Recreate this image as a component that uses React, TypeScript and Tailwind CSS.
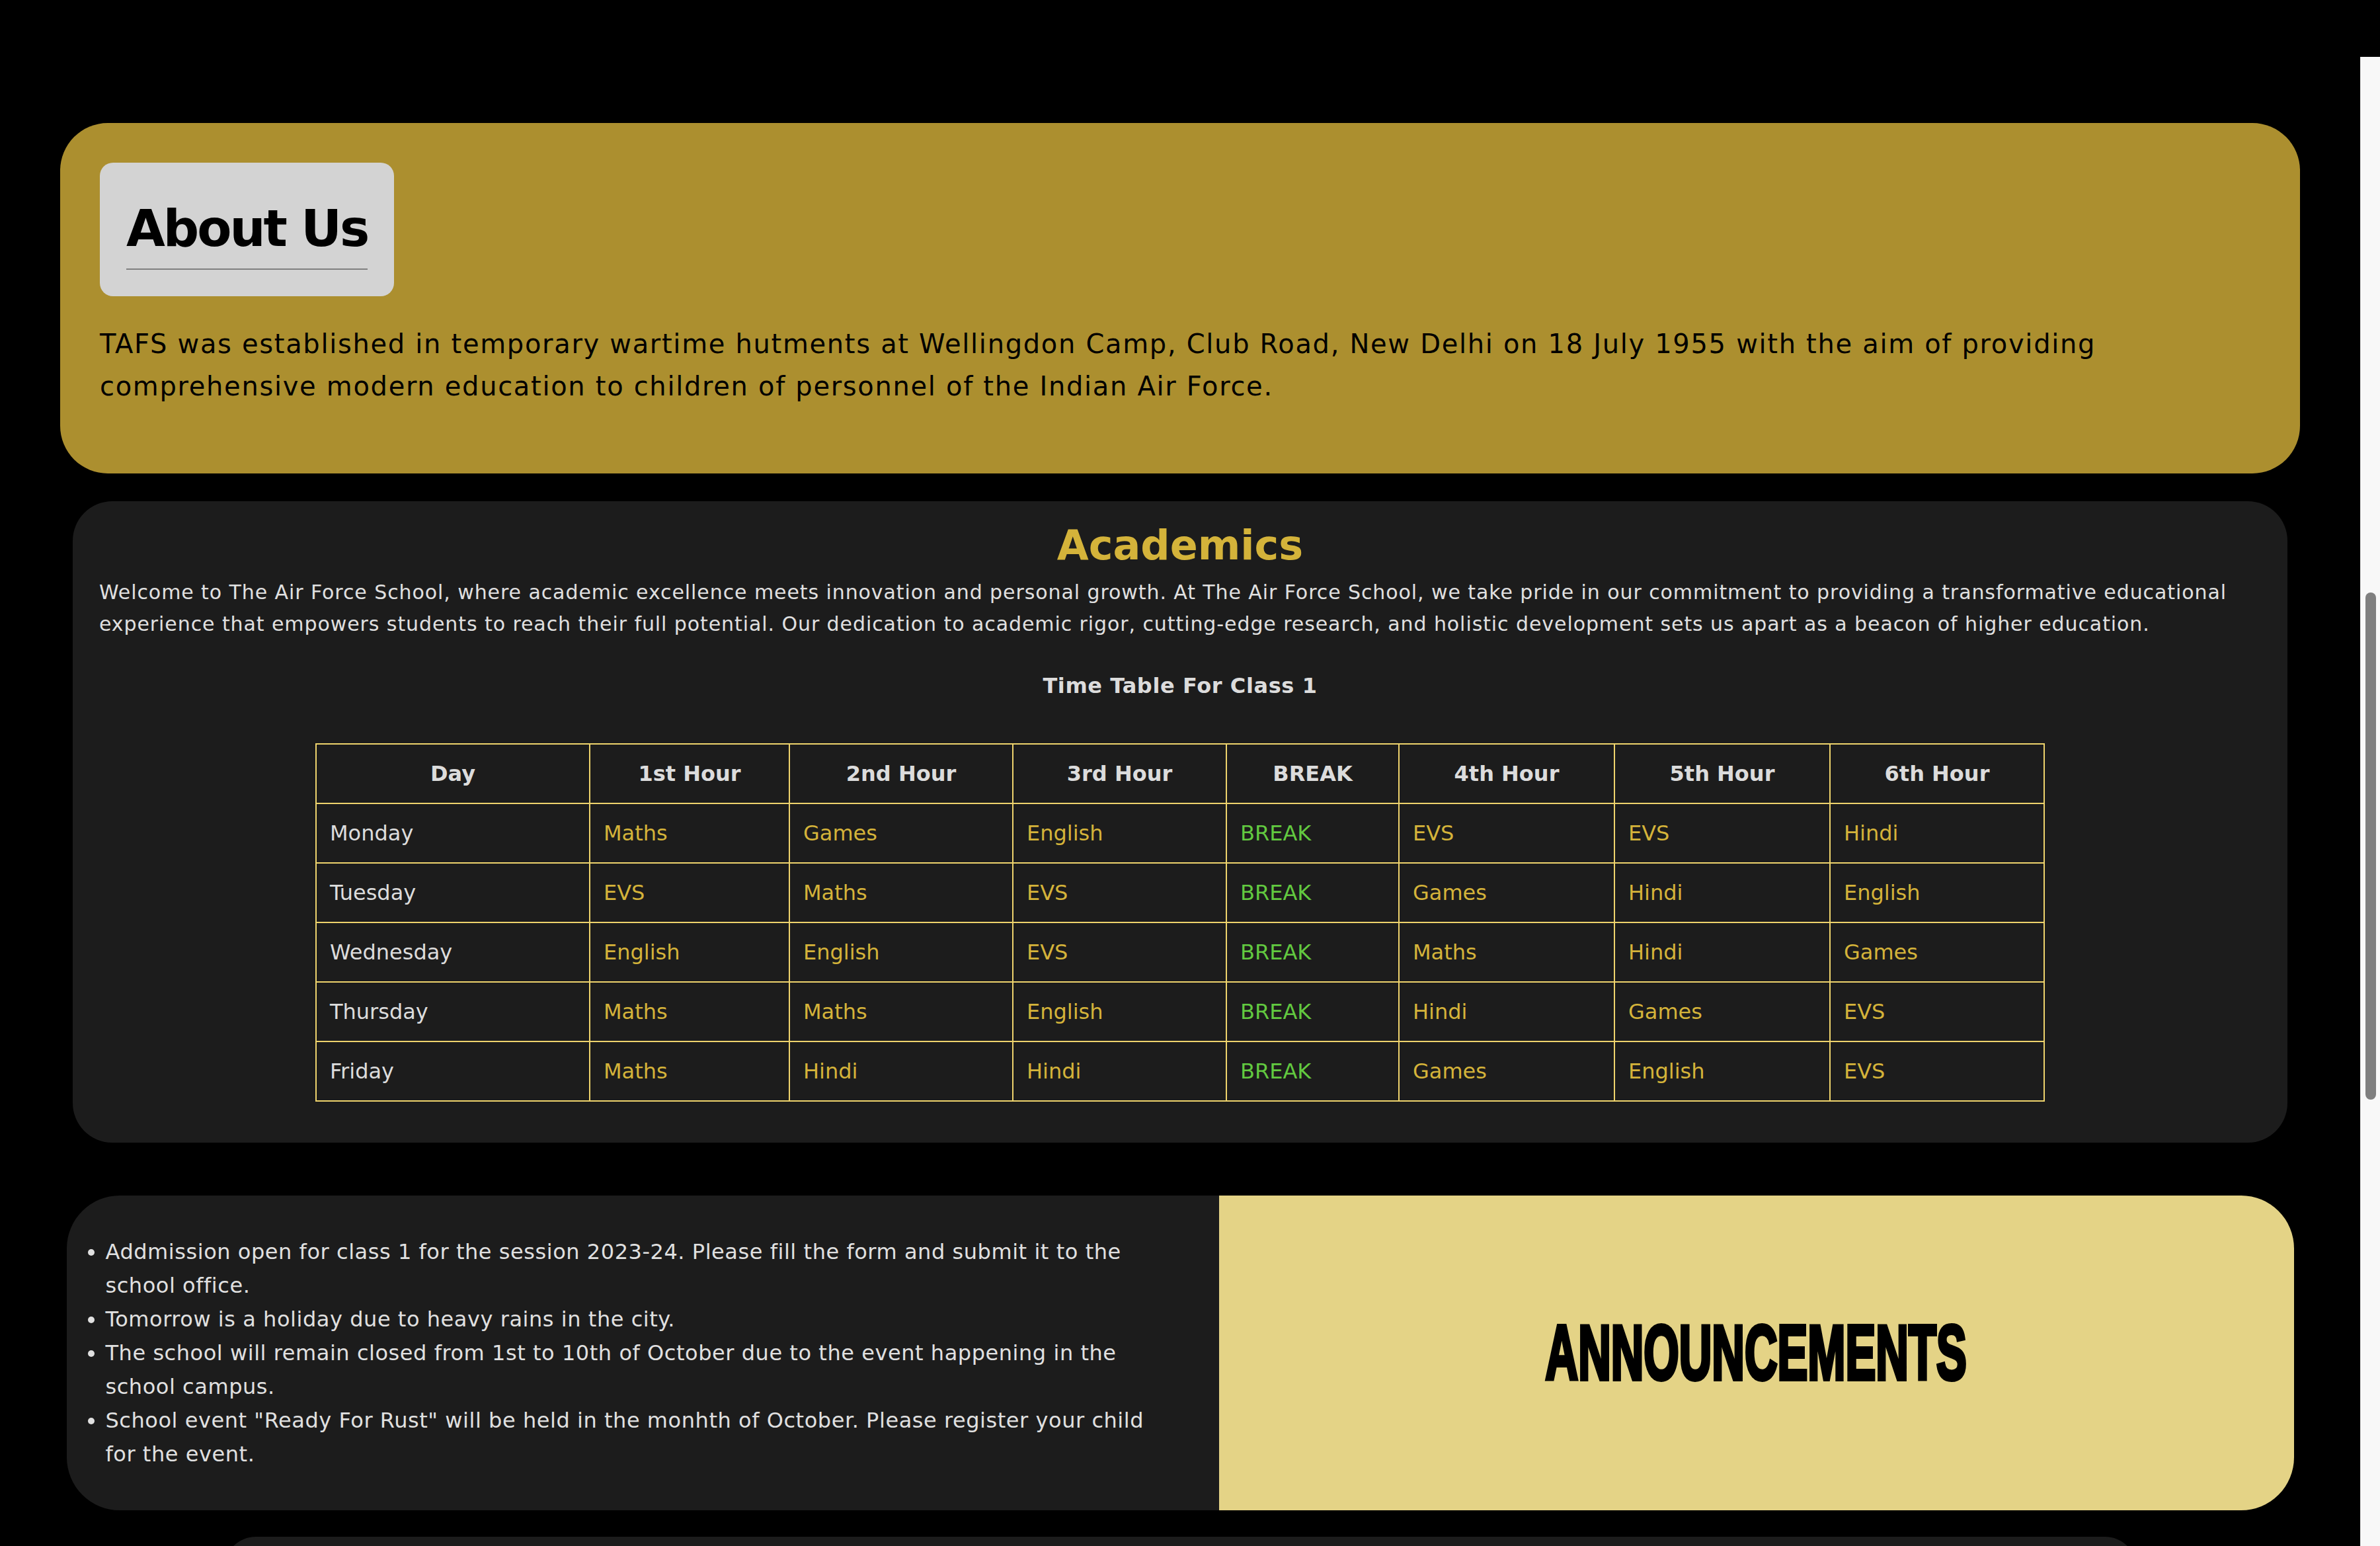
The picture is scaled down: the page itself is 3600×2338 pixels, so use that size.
const days = [
  { day: 'Monday', slots: ['Maths', 'Games', 'English', 'EVS', 'EVS', 'Hindi'] },
  { day: 'Tuesday', slots: ['EVS', 'Maths', 'EVS', 'Games', 'Hindi', 'English'] },
  { day: 'Wednesday', slots: ['English', 'English', 'EVS', 'Maths', 'Hindi', 'Games'] },
  { day: 'Thursday', slots: ['Maths', 'Maths', 'English', 'Hindi', 'Games', 'EVS'] },
  { day: 'Friday', slots: ['Maths', 'Hindi', 'Hindi', 'Games', 'English', 'EVS'] },
];

const headers = [
  { label: 'Day', width: 'w-[414px]' },
  { label: '1st Hour', width: 'w-[302px]' },
  { label: '2nd Hour', width: 'w-[338px]' },
  { label: '3rd Hour', width: 'w-[323px]' },
  { label: 'BREAK', width: 'w-[261px]' },
  { label: '4th Hour', width: 'w-[326px]' },
  { label: '5th Hour', width: 'w-[326px]' },
  { label: '6th Hour', width: 'w-[324px]' },
];

const announcements = [
  'Addmission open for class 1 for the session 2023-24. Please fill the form and submit it to the school office.',
  'Tomorrow is a holiday due to heavy rains in the city.',
  'The school will remain closed from 1st to 10th of October due to the event happening in the school campus.',
  'School event "Ready For Rust" will be held in the monhth of October. Please register your child for the event.',
];

const cellClass = 'h-[90px] border-2 border-[#eed36c] px-[20px] text-left font-normal';

function Timetable() {
  return (
    <table className="mx-auto mt-[61px] w-[2614px] table-fixed border-collapse text-[32px]">
      <thead>
        <tr>
          {headers.map((h) => (
            <th
              key={h.label}
              className={`${h.width} h-[90px] border-2 border-[#eed36c] px-[20px] text-center font-bold text-[#dcdcdc]`}
            >
              {h.label}
            </th>
          ))}
        </tr>
      </thead>
      <tbody>
        {days.map((row) => (
          <tr key={row.day}>
            <td className={`${cellClass} text-[#dcdcdc]`}>{row.day}</td>
            {row.slots.slice(0, 3).map((s, i) => (
              <td key={i} className={`${cellClass} text-[#d4b33a]`}>
                {s}
              </td>
            ))}
            <td className={`${cellClass} text-[#62c940]`}>BREAK</td>
            {row.slots.slice(3).map((s, i) => (
              <td key={i + 3} className={`${cellClass} text-[#d4b33a]`}>
                {s}
              </td>
            ))}
          </tr>
        ))}
      </tbody>
    </table>
  );
}

export default function App() {
  return (
    <div className="flex h-[2338px] flex-col overflow-hidden bg-black font-['DejaVu_Sans',sans-serif]">
      <div className="h-[86px] shrink-0 bg-black" />

      <div className="flex min-h-0 flex-1">
        <main className="flex min-w-0 flex-1 flex-col items-center overflow-hidden pt-[100px]">
          {/* About */}
          <section className="w-[3388px] shrink-0 rounded-[72px] bg-[#ac8f2f] p-[60px]">
            <div className="inline-block rounded-[20px] bg-[#d3d3d3] p-[40px]">
              <h1 className="border-b-2 border-[#808080] text-[76px] font-bold leading-[120px] tracking-[-3px] text-black">
                About Us
              </h1>
            </div>
            <p className="my-[40px] text-[40px] leading-[64px] tracking-[1.68px] text-black">
              TAFS was established in temporary wartime hutments at Wellingdon Camp, Club Road, New Delhi on 18
              July 1955 with the aim of providing comprehensive modern education to children of personnel of the
              Indian Air Force.
            </p>
          </section>

          {/* Academics */}
          <section className="mt-[42px] w-[3350px] shrink-0 rounded-[60px] bg-[#1c1c1c] px-[40px] pb-[62px] pt-[28px]">
            <h2 className="text-center text-[62px] font-bold leading-[77px] text-[#d4b33a]">Academics</h2>
            <p className="mt-[9px] text-[30px] leading-[48px] tracking-[0.92px] text-[#e0e0e0]">
              Welcome to The Air Force School, where academic excellence meets innovation and personal growth. At
              The Air Force School, we take pride in our commitment to providing a transformative educational
              experience that empowers students to reach their full potential. Our dedication to academic rigor,
              cutting-edge research, and holistic development sets us apart as a beacon of higher education.
            </p>
            <h3 className="mt-[44px] text-center text-[32px] font-bold leading-[51px] tracking-[0.6px] text-[#dcdcdc]">
              Time Table For Class 1
            </h3>
            <Timetable />
          </section>

          {/* Announcements */}
          <section className="mt-[80px] flex h-[476px] w-[3369px] shrink-0">
            <div className="flex w-[1743px] items-center rounded-l-[80px] bg-[#1c1c1c] pl-[59px]">
              <ul className="w-[1600px] list-disc text-[32px] leading-[51px] tracking-[0.55px] text-[#e0e0e0]">
                {announcements.map((a) => (
                  <li key={a}>{a}</li>
                ))}
              </ul>
            </div>
            <div className="flex flex-1 items-center justify-center rounded-r-[80px] bg-[#e4d386]">
              <h2 className="scale-x-[0.592] font-['Liberation_Sans',sans-serif] text-[116px] font-bold leading-none text-black [-webkit-text-stroke:6px_black]">
                ANNOUNCEMENTS
              </h2>
            </div>
          </section>

          <div className="mt-[40px] h-[120px] w-[2893px] shrink-0 rounded-t-[48px] bg-[#1c1c1c]" />
        </main>

        {/* scrollbar */}
        <div className="w-[30px] shrink-0 border-l border-[#e6e6e6] bg-[#f8f8f8] pl-[7px] pt-[810px]">
          <div className="h-[767px] w-[16px] rounded-full bg-[#7f7f7f]" />
        </div>
      </div>
    </div>
  );
}
